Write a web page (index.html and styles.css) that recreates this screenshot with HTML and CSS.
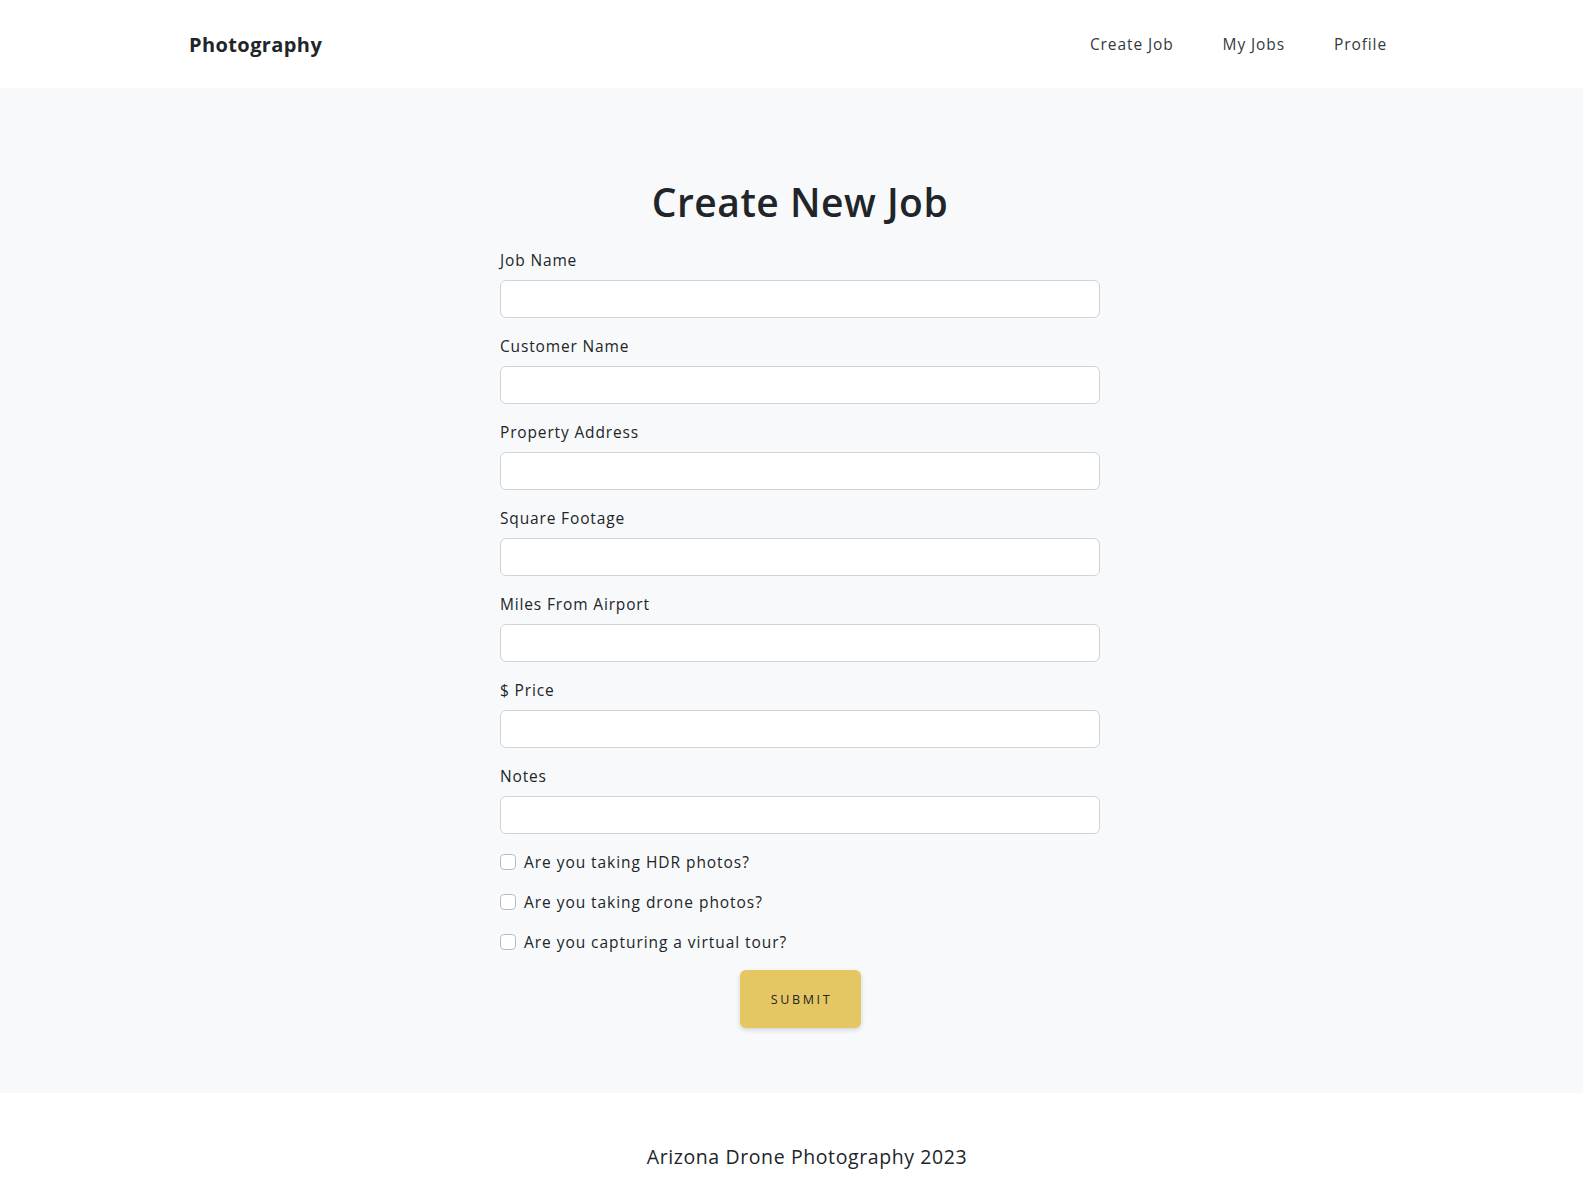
FILE: index.html
```html
<!DOCTYPE html>
<html lang="en">
<head>
<meta charset="utf-8">
<title>Photography</title>
<link rel="stylesheet" href="styles.css">
</head>
<body>
<header class="navbar">
  <div class="nav-inner">
    <a class="brand" href="#">Photography</a>
    <nav class="nav-links">
      <a href="#">Create Job</a>
      <a href="#">My Jobs</a>
      <a href="#">Profile</a>
    </nav>
  </div>
</header>
<main class="main">
  <div class="form-wrap">
    <h1 class="title">Create New Job</h1>
    <form class="job-form">
      <div class="group"><label class="label">Job Name</label><input class="input" type="text"></div>
      <div class="group"><label class="label">Customer Name</label><input class="input" type="text"></div>
      <div class="group"><label class="label">Property Address</label><input class="input" type="text"></div>
      <div class="group"><label class="label">Square Footage</label><input class="input" type="text"></div>
      <div class="group"><label class="label">Miles From Airport</label><input class="input" type="text"></div>
      <div class="group"><label class="label">$ Price</label><input class="input" type="text"></div>
      <div class="group"><label class="label">Notes</label><input class="input" type="text"></div>
      <label class="check"><input type="checkbox" class="box"><span>Are you taking HDR photos?</span></label>
      <label class="check"><input type="checkbox" class="box"><span>Are you taking drone photos?</span></label>
      <label class="check"><input type="checkbox" class="box"><span>Are you capturing a virtual tour?</span></label>
      <div class="actions"><button type="button" class="submit">SUBMIT</button></div>
    </form>
  </div>
</main>
<footer class="footer">
  <p class="footer-text">Arizona Drone Photography 2023</p>
</footer>
</body>
</html>
```
FILE: styles.css
```css
* { box-sizing: border-box; }
html, body { margin: 0; padding: 0; }
body {
  font-family: "Open Sans", "Noto Sans", sans-serif;
  color: #212529;
  background: #fff;
}
a { color: inherit; text-decoration: none; }

.navbar {
  height: 88px;
  background: #fff;
}
.nav-inner {
  height: 100%;
  margin: 0 196px 0 189px;
  display: flex;
  align-items: center;
  justify-content: space-between;
}
.brand {
  font-size: 20px;
  font-weight: 700;
  letter-spacing: 0.4px;
  color: #212529;
}
.nav-links {
  display: flex;
  gap: 49px;
  font-size: 15.5px;
  letter-spacing: 0.9px;
  color: #343a40;
}

.main {
  background: #f8f9fa;
  padding: 90px 0 65px 17px;
}
.form-wrap {
  width: 600px;
  margin: 0 auto;
}
.title {
  margin: 0 0 22px;
  text-align: center;
  font-size: 39px;
  line-height: 48px;
  font-weight: 600;
  letter-spacing: 0.5px;
  color: #212529;
}
.group {
  margin-bottom: 16px;
}
.label {
  display: block;
  font-size: 15.5px;
  line-height: 24px;
  letter-spacing: 0.85px;
  margin-bottom: 8px;
}
.input {
  display: block;
  width: 100%;
  height: 38px;
  border: 1px solid #ced4da;
  border-radius: 6px;
  background: #fff;
  font: inherit;
}
.check {
  display: flex;
  align-items: center;
  height: 24px;
  margin-bottom: 16px;
  font-size: 15.5px;
  letter-spacing: 0.95px;
}
.box {
  appearance: none;
  -webkit-appearance: none;
  width: 16px;
  height: 16px;
  margin: 0 8px 0 0;
  border: 1px solid #b9bec4;
  border-radius: 4px;
  background: #fff;
}
.actions {
  display: flex;
  justify-content: center;
}
.submit {
  width: 121px;
  height: 58px;
  border: none;
  border-radius: 6px;
  background: #e4c662;
  color: #212529;
  font-family: "Open Sans", sans-serif;
  font-size: 12.5px;
  letter-spacing: 2.6px;
  box-shadow: 0 2px 5px rgba(0,0,0,0.15);
  padding: 0 0 0 3px;
}
.footer {
  background: #fff;
  padding: 49px 0 0 17px;
}
.footer-text {
  margin: 0;
  text-align: center;
  font-size: 19.5px;
  line-height: 30px;
  letter-spacing: 0.6px;
  padding-left: 14px;
}
```
